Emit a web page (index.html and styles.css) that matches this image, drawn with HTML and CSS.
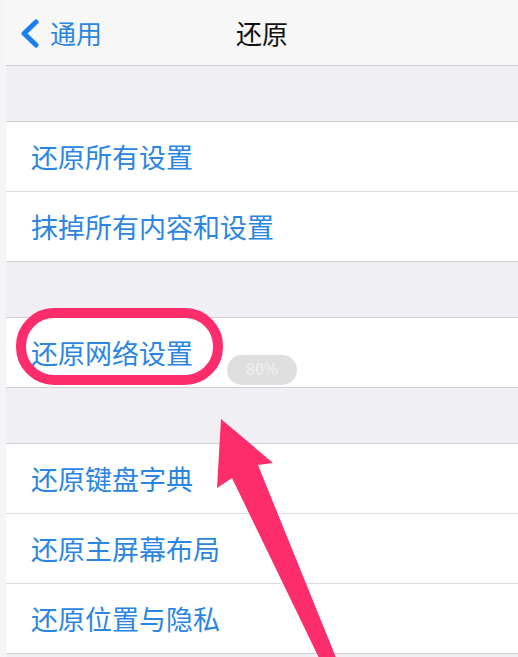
FILE: index.html
```html
<!DOCTYPE html>
<html lang="zh-CN">
  <head>
    <meta charset="UTF-8" />
    <meta name="viewport" content="width=device-width, initial-scale=1.0" />
    <title>还原</title>
    <link rel="stylesheet" href="styles.css">
  </head>
  <body>
    <div class="screen">
      <header class="nav">
        <a class="nav-back" href="#">
          <svg class="chevron" width="24" height="30" viewBox="0 0 24 30">
            <path d="M18 4 L6 15.5 L18 27" fill="none" stroke="#1a7ff0" stroke-width="5" stroke-linecap="round" stroke-linejoin="round" />
          </svg>
          <span>通用</span>
        </a>
        <h1 class="nav-title">还原</h1>
      </header>

      <ul class="group">
        <li class="cell">还原所有设置</li>
        <li class="cell">抹掉所有内容和设置</li>
      </ul>

      <ul class="group">
        <li class="cell">还原网络设置</li>
      </ul>

      <ul class="group">
        <li class="cell">还原键盘字典</li>
        <li class="cell">还原主屏幕布局</li>
        <li class="cell">还原位置与隐私</li>
      </ul>
    </div>

    <!-- annotations drawn over the screenshot -->
    <div class="mark-oval"></div>
    <div class="hud">80%</div>
    <svg class="mark-arrow" width="518" height="657" viewBox="0 0 518 657">
      <polygon points="221,419 273,463 258,465 337,660 320,660 232,478 217,488" fill="#fd2c6b" />
    </svg>
  </body>
</html>
```

FILE: styles.css
```css
:root {
  --blue: #2a86e2;
  --pink: #fd2c6b;
  --line: #cfced3;
  --group-bg: #efeff4;
}
body {
  margin: 0;
  background: #f4f5f7;
  font-family: "Noto Sans CJK SC", "Noto Sans", sans-serif;
  overflow: hidden;
  position: relative;
  height: 657px;
}
.screen {
  margin-left: 6px;
  background: var(--group-bg);
  min-height: 657px;
}
.nav {
  height: 65px;
  background: #f7f7f8;
  border-bottom: 1px solid var(--line);
  display: flex;
  align-items: center;
  justify-content: center;
  position: relative;
}
.nav-back {
  position: absolute;
  left: 12px;
  top: 0;
  height: 65px;
  display: flex;
  align-items: center;
  gap: 8px;
  color: var(--blue);
  text-decoration: none;
  font-size: 26px;
}
.nav-title {
  margin: 0;
  font-size: 26px;
  font-weight: 400;
  color: #111;
}
.group {
  list-style: none;
  margin: 55px 0 0;
  padding: 0;
  background: #fff;
  border-top: 1px solid var(--line);
  border-bottom: 1px solid var(--line);
}
.cell {
  height: 69px;
  display: flex;
  align-items: center;
  padding-left: 25px;
  font-size: 27px;
  color: var(--blue);
  position: relative;
}
.cell + .cell {
  border-top: 1px solid #dcdbe0;
}
.mark-oval {
  position: absolute;
  left: 16px;
  top: 308px;
  width: 187px;
  height: 57px;
  border: 10px solid var(--pink);
  border-radius: 38px;
}
.hud {
  position: absolute;
  left: 227px;
  top: 355px;
  width: 70px;
  height: 30px;
  border-radius: 15px;
  background: #dedede;
  color: #ececec;
  font-family: "Liberation Sans", sans-serif;
  font-weight: 700;
  font-size: 16px;
  display: flex;
  align-items: center;
  justify-content: center;
}
.mark-arrow {
  position: absolute;
  left: 0;
  top: 0;
}
```
